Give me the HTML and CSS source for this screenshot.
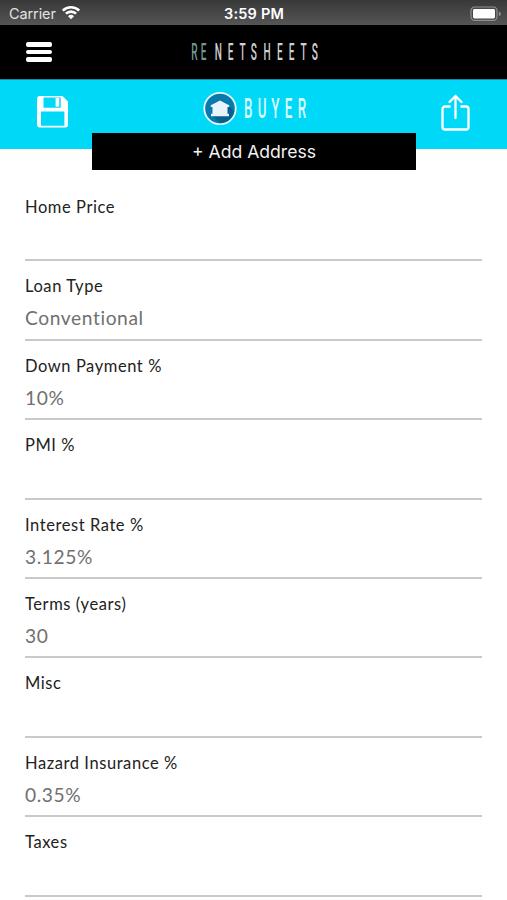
FILE: index.html
```html
<!DOCTYPE html>
<html lang="en">
<head>
    <meta charset="UTF-8">
    <meta name="viewport" content="width=device-width, initial-scale=1.0">
    <title>RE Netsheets - Buyer</title>
    <link rel="stylesheet" href="styles.css">
</head>
<body>
    <div class="status-bar">
        <div class="carrier">
            <span>Carrier</span>
            <svg width="20" height="15" viewBox="0 0 20 15" fill="none" stroke="#fff" stroke-width="2.6">
                <path d="M1.8 5.6a11.6 11.6 0 0 1 16.4 0"/>
                <path d="M4.9 8.7a7.2 7.2 0 0 1 10.2 0"/>
                <path d="M10 14.2L7 11.2a4.3 4.3 0 0 1 6 0z" fill="#fff" stroke="none"/>
            </svg>
        </div>
        <div class="time">3:59 PM</div>
        <svg class="battery" width="32" height="16" viewBox="0 0 32 16">
            <rect x="1" y="1" width="26" height="13.4" rx="3.6" fill="#484848" stroke="#909090" stroke-width="1.2"/>
            <rect x="3" y="3" width="22" height="9.4" rx="1.4" fill="#fff"/>
            <path d="M28.8 5.2q2.2 1 2.2 2.5t-2.2 2.5z" fill="#909090"/>
        </svg>
    </div>
    <header>
        <button class="menu" aria-label="Menu">
            <span></span>
            <span></span>
            <span></span>
        </button>
        <svg class="logo" width="134" height="36" viewBox="0 0 134 36">
            <g transform="scale(.42 1)">
                <text class="logo-re" y="26.5" x="10 33">RE</text>
                <text y="26.500" x="66 97 125 152 182 214 242 270 297">NETSHEETS</text>
            </g>
        </svg>
    </header>
    <div class="toolbar">
        <svg class="save" width="32" height="32" viewBox="0 0 32 32">
            <path fill="#fff" fill-rule="evenodd" d="M3 0h22.500l5.500 5.500v23a3 3 0 0 1-3 3H3a3 3 0 0 1-3-3V3a3 3 0 0 1 3-3zM6.500 1.600v10.200h17.200V1.600zM4 15.600v14.200h23.400V15.600z"/>
            <rect x="18.600" y="2" width="3.600" height="8.600" fill="#fff"/>
        </svg>
        <div class="page-title">
            <svg width="34" height="35" viewBox="0 0 34 35">
                <circle cx="17" cy="17.500" r="15.700" fill="#087aae" stroke="#e6faff" stroke-width="1.800"/>
                <path d="M26 15l5.300 5a14.800 14.800 0 0 1-14.500 12.300L9 24z" fill="#07618e"/>
                <path d="M17 9.500l9.200 4.800v1.800h-1.700v6.700h1.500v2.400H8v-2.400h1.500v-6.700H7.800v-1.800z" fill="#e8f3fc"/>
            </svg>
            <svg class="title-text" width="68" height="40" viewBox="0 0 68 40">
                <g transform="scale(.48 1)">
                    <text y="30" x="6 35 63 91 118">BUYER</text>
                </g>
            </svg>
        </div>
        <svg class="share" width="29" height="37" viewBox="0 0 29 37" fill="none" stroke="#fff" stroke-width="2.300">
            <path d="M9.500 12.500H4a2.500 2.500 0 0 0-2.500 2.500v18A2.500 2.500 0 0 0 4 35.500h21a2.500 2.500 0 0 0 2.500-2.500V15a2.500 2.500 0 0 0-2.500-2.500h-5.500"/>
            <path d="M14.500 24V2M8.500 8l6-6 6 6" stroke-linecap="round" stroke-linejoin="round"/>
        </svg>
        <button class="add-address">+ Add Address</button>
    </div>
    <main class="fields">
        <div class="field">
            <label>Home Price</label>
            <p></p>
        </div>
        <div class="field">
            <label>Loan Type</label>
            <p>Conventional</p>
        </div>
        <div class="field">
            <label>Down Payment %</label>
            <p>10%</p>
        </div>
        <div class="field">
            <label>PMI %</label>
            <p></p>
        </div>
        <div class="field">
            <label>Interest Rate %</label>
            <p>3.125%</p>
        </div>
        <div class="field">
            <label>Terms (years)</label>
            <p>30</p>
        </div>
        <div class="field">
            <label>Misc</label>
            <p></p>
        </div>
        <div class="field">
            <label>Hazard Insurance %</label>
            <p>0.35%</p>
        </div>
        <div class="field">
            <label>Taxes</label>
            <p></p>
        </div>
    </main>
</body>
</html>
```
FILE: styles.css
```css
* {
    box-sizing: border-box;
}
body {
    margin: 0;
    height: 900px;
    overflow: hidden;
    background-color: #fff;
    color: #222;
    font-family: Lato, sans-serif;
}
button {
    border: none;
    padding: 0;
    cursor: pointer;
}
.status-bar {
    display: grid;
    grid-template-columns: 1fr auto 1fr;
    align-items: center;
    height: 25px;
    padding: 2px 6px 0 9px;
    background: linear-gradient(#383838, #555);
    color: #fff;
    font-family: Inter, sans-serif;
    font-size: 14.5px;
}
.carrier {
    display: flex;
    align-items: center;
    gap: 6px;
    color: #e2e2e2;
    letter-spacing: -0.1px;
}
.carrier svg {
    margin-top: -3px;
    margin-left: -1px;
}
.time {
    margin-left: -2px;
    font-weight: 600;
    letter-spacing: 0.2px;
}
.battery {
    justify-self: end;
    margin-right: -1px;
}
header {
    display: grid;
    grid-template-columns: 1fr auto 1fr;
    align-items: center;
    height: 54px;
    padding: 0 26px;
    background-color: #000;
}
.menu {
    display: flex;
    flex-direction: column;
    gap: 3px;
    width: 26px;
    background: none;
}
.menu span {
    height: 4.5px;
    border-radius: 2px;
    background-color: #fff;
}
.logo text {
    font-family: Roboto, sans-serif;
    font-size: 24px;
    font-weight: 500;
    fill: #cfcfcf;
}
.logo .logo-re {
    fill: #6f9a90;
}
.toolbar {
    position: relative;
    display: flex;
    justify-content: space-between;
    height: 70px;
    padding: 0 37px 0 36px;
    border-top: 1px solid #168ca0;
    background-color: #00d8f8;
}
.save {
    margin-top: 16px;
    margin-left: 0.5px;
}
.page-title {
    display: flex;
    gap: 4px;
    margin-top: 11px;
    margin-left: 3px;
}
.title-text {
    margin-top: -3px;
}
.title-text text {
    font-family: Roboto, sans-serif;
    font-size: 28px;
    font-weight: 500;
    fill: #d9fbff;
}
.share {
    margin-top: 14px;
}
.add-address {
    position: absolute;
    top: 53px;
    left: 92px;
    width: 324px;
    height: 37px;
    background-color: #000;
    color: #f2f2f2;
    font-family: Inter, sans-serif;
    font-size: 17.6px;
}
.fields {
    padding: 33px 25px 0;
}
.field {
    height: 79.4px;
    padding-top: 14px;
    border-bottom: 2px solid #c9c9c9;
}
.field label {
    display: block;
    font-size: 16.5px;
    line-height: 22px;
    letter-spacing: 0.57px;
}
.field p {
    margin: 7px 0 0;
    color: #707070;
    font-size: 19.2px;
    line-height: 27px;
    letter-spacing: 0.6px;
}
```
